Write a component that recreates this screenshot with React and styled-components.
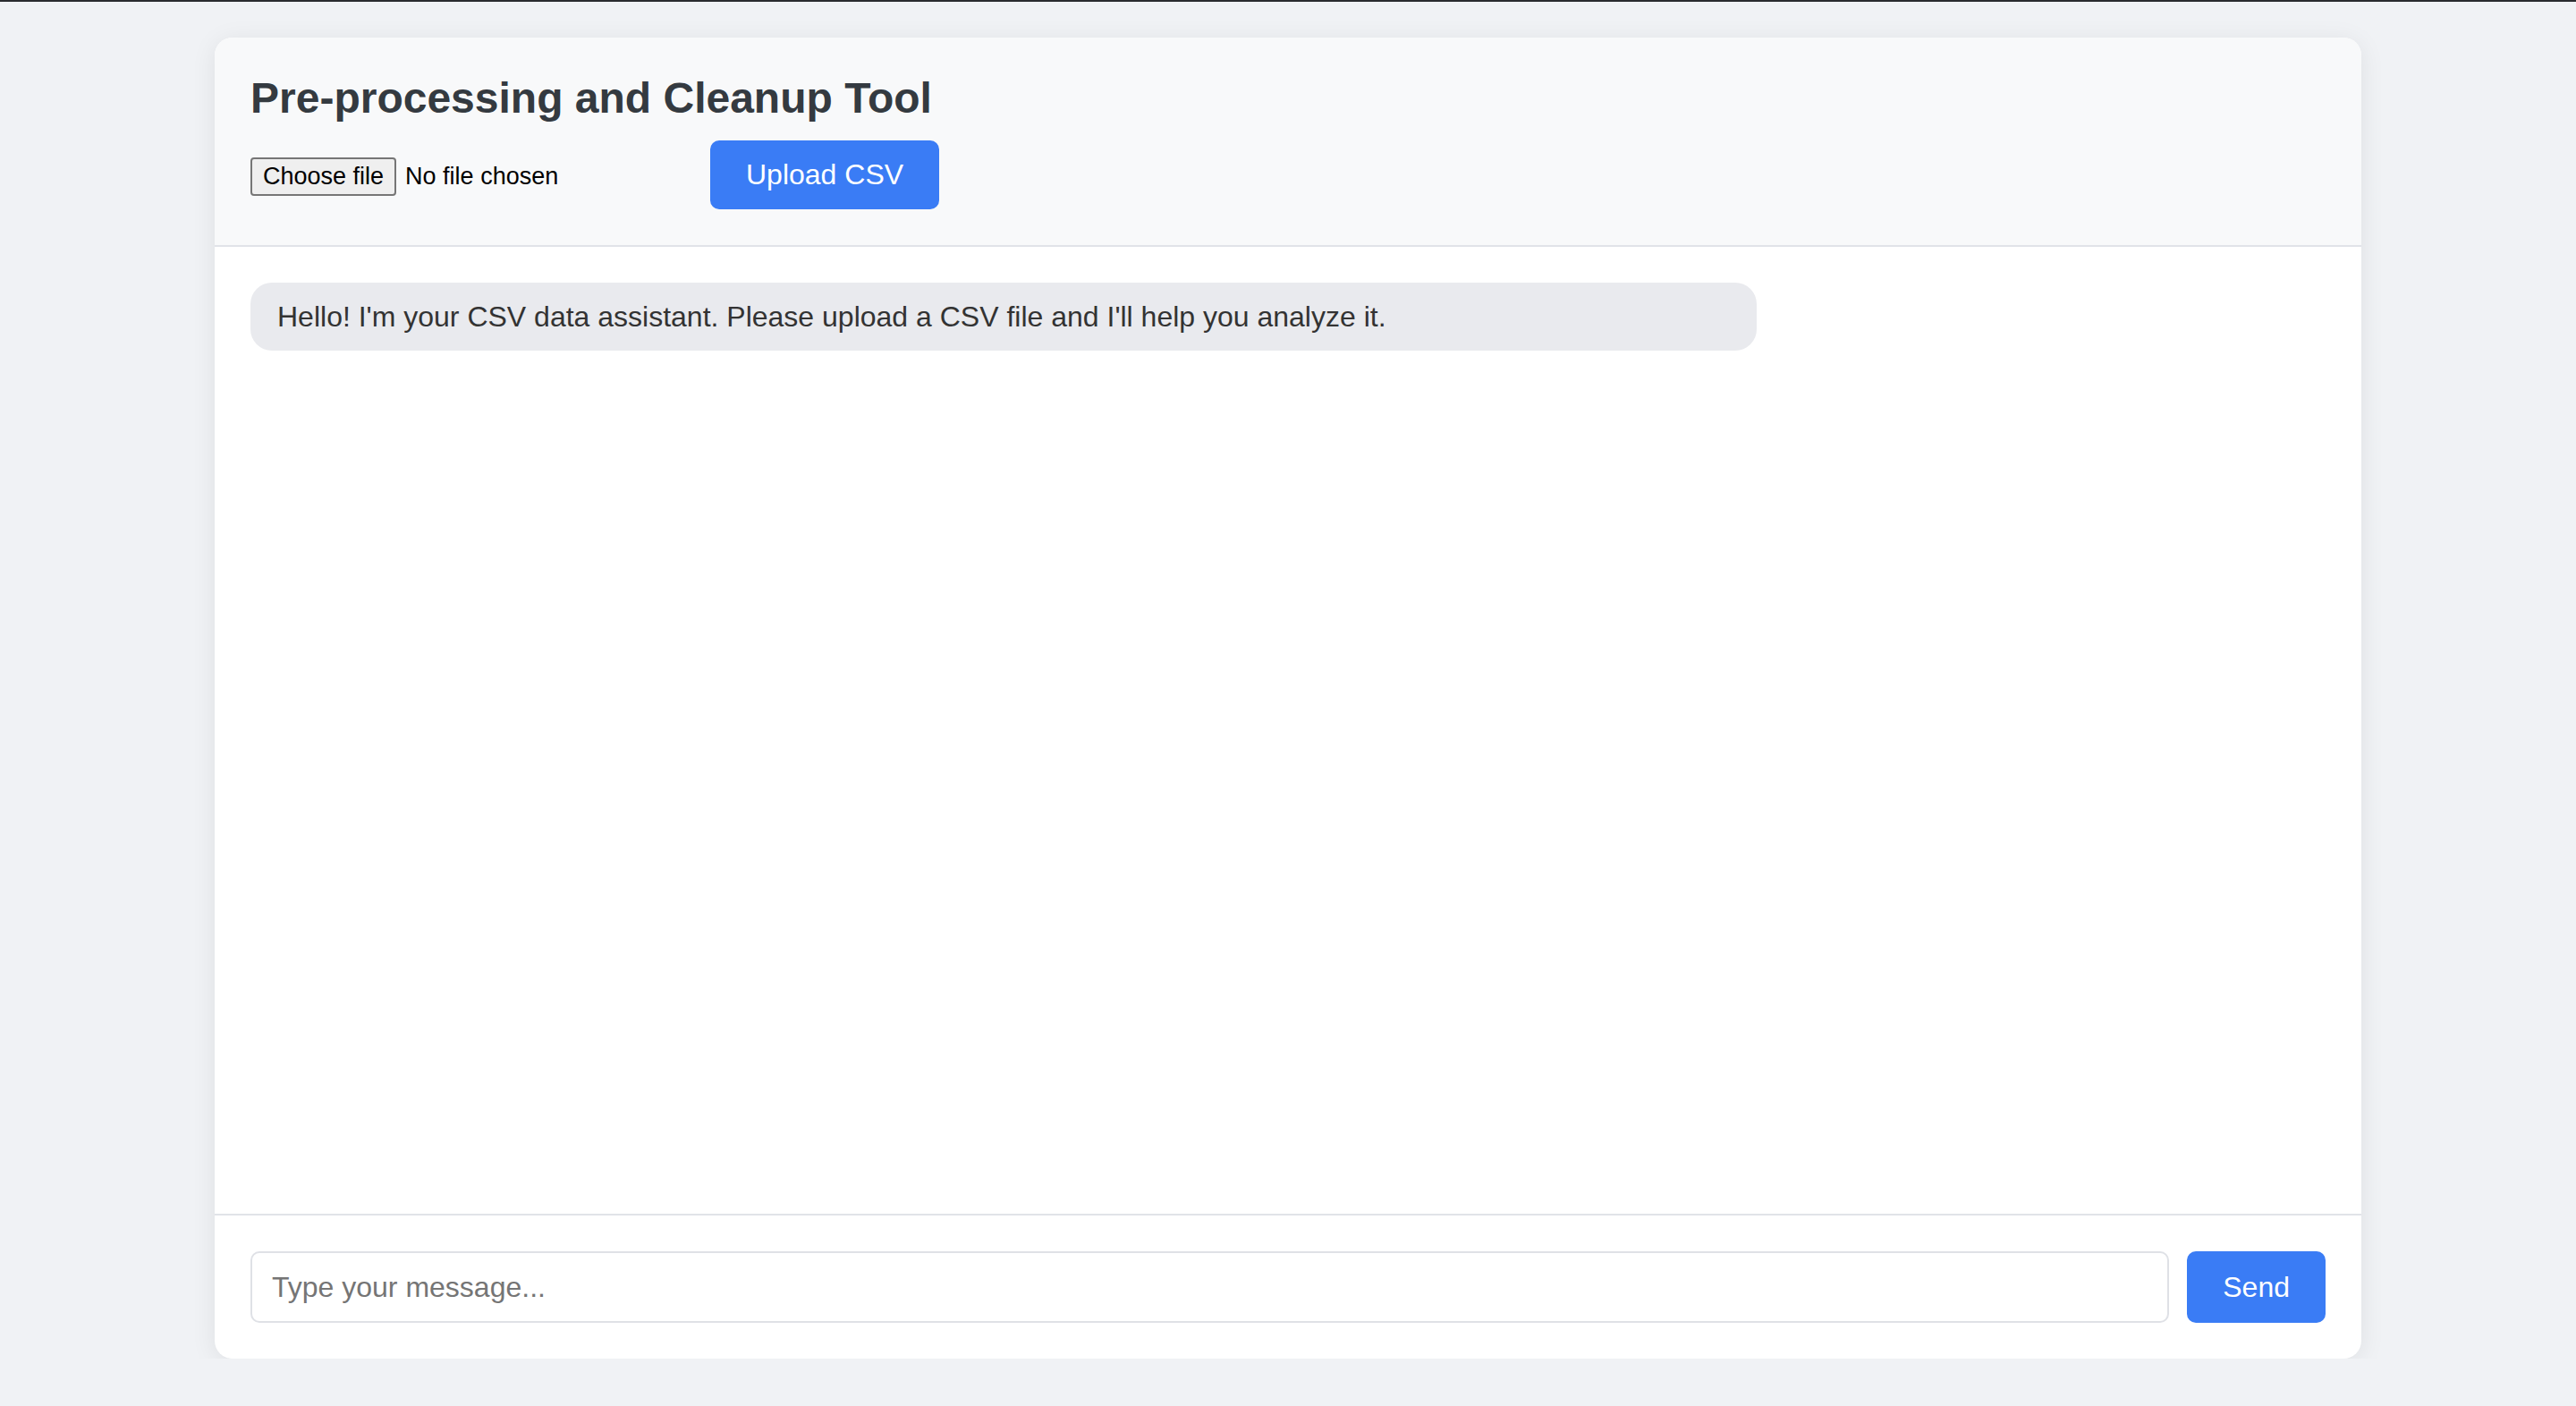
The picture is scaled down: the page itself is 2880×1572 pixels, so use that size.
import React, { Component } from "react";
import styled, { createGlobalStyle } from "styled-components";

const GlobalStyle = createGlobalStyle`
  html, body {
    margin: 0;
    padding: 0;
  }
  body {
    background: #f0f2f5;
    font-family: "Liberation Sans", Arial, sans-serif;
    color: #343a40;
  }
  * {
    box-sizing: border-box;
  }
`;

const TopEdge = styled.div`
  height: 2px;
  background: #2a2b2f;
`;

const Card = styled.div`
  width: 2400px;
  height: 1477px;
  margin: 40px auto 0;
  background: #ffffff;
  border-radius: 20px;
  box-shadow: 0 4px 28px rgba(0, 0, 0, 0.08);
  display: flex;
  flex-direction: column;
  overflow: hidden;
`;

const Header = styled.div`
  background: #f8f9fa;
  padding: 40px;
  border-bottom: 2px solid #e1e3e8;
`;

const Title = styled.h1`
  margin: 0 0 20px;
  font-size: 48px;
  line-height: 55px;
  font-weight: 700;
  color: #343a40;
`;

const UploadRow = styled.div`
  display: flex;
  align-items: center;
  gap: 20px;
`;

const FileField = styled.label`
  width: 494px;
  display: flex;
  align-items: center;
  font-size: 27px;
  color: #000;
  cursor: pointer;
  padding-top: 4px;

  input {
    display: none;
  }
`;

const FileButton = styled.span`
  display: inline-block;
  padding: 4px 12px;
  margin-right: 10px;
  line-height: 31px;
  background: #efefef;
  border: 2px solid #767676;
  border-radius: 4px;
`;

const Button = styled.button`
  font-family: inherit;
  font-size: 32px;
  line-height: 37px;
  color: #ffffff;
  background: #3a7cf5;
  border: none;
  border-radius: 10px;
  padding: ${props => (props.compact ? "0 40px" : "20px 40px")};
  cursor: pointer;
`;

const Messages = styled.div`
  flex: 1;
  padding: 40px;
  display: flex;
  flex-direction: column;
  gap: 20px;
  overflow-y: auto;
`;

const Bubble = styled.div`
  box-sizing: content-box;
  align-self: ${props => (props.fromUser ? "flex-end" : "stretch")};
  max-width: 70%;
  padding: 20px 30px;
  font-size: 32px;
  line-height: 36px;
  color: #333333;
  background: ${props => (props.fromUser ? "#3a7cf5" : "#e9eaee")};
  border-radius: 24px;
`;

const InputArea = styled.form`
  display: flex;
  gap: 20px;
  padding: 40px;
  border-top: 2px solid #e1e3e8;
`;

const MessageInput = styled.input`
  flex: 1;
  font-family: inherit;
  font-size: 32px;
  line-height: 36px;
  padding: 20px 22px;
  border: 2px solid #dfe1e6;
  border-radius: 10px;
  color: #333;
  outline: none;

  &::placeholder {
    color: #757575;
  }
`;

class App extends Component {
  state = {
    fileName: "",
    text: "",
    messages: [
      {
        fromUser: false,
        text:
          "Hello! I'm your CSV data assistant. Please upload a CSV file and I'll help you analyze it."
      }
    ]
  };

  handleFile = event => {
    const file = event.target.files[0];
    this.setState({ fileName: file ? file.name : "" });
  };

  handleChange = event => {
    this.setState({ text: event.target.value });
  };

  send = event => {
    event.preventDefault();
    if (!this.state.text.trim()) return;
    this.setState({
      messages: [...this.state.messages, { fromUser: true, text: this.state.text }],
      text: ""
    });
  };

  render() {
    return (
      <>
        <GlobalStyle />
        <TopEdge />
        <Card>
          <Header>
            <Title>Pre-processing and Cleanup Tool</Title>
            <UploadRow>
              <FileField>
                <input type="file" accept=".csv" onChange={this.handleFile} />
                <FileButton>Choose file</FileButton>
                {this.state.fileName || "No file chosen"}
              </FileField>
              <Button type="button">Upload CSV</Button>
            </UploadRow>
          </Header>
          <Messages>
            {this.state.messages.map((m, i) => (
              <Bubble key={i} fromUser={m.fromUser}>
                {m.text}
              </Bubble>
            ))}
          </Messages>
          <InputArea onSubmit={this.send}>
            <MessageInput
              placeholder="Type your message..."
              value={this.state.text}
              onChange={this.handleChange}
            />
            <Button compact type="submit">
              Send
            </Button>
          </InputArea>
        </Card>
      </>
    );
  }
}

export default App;
